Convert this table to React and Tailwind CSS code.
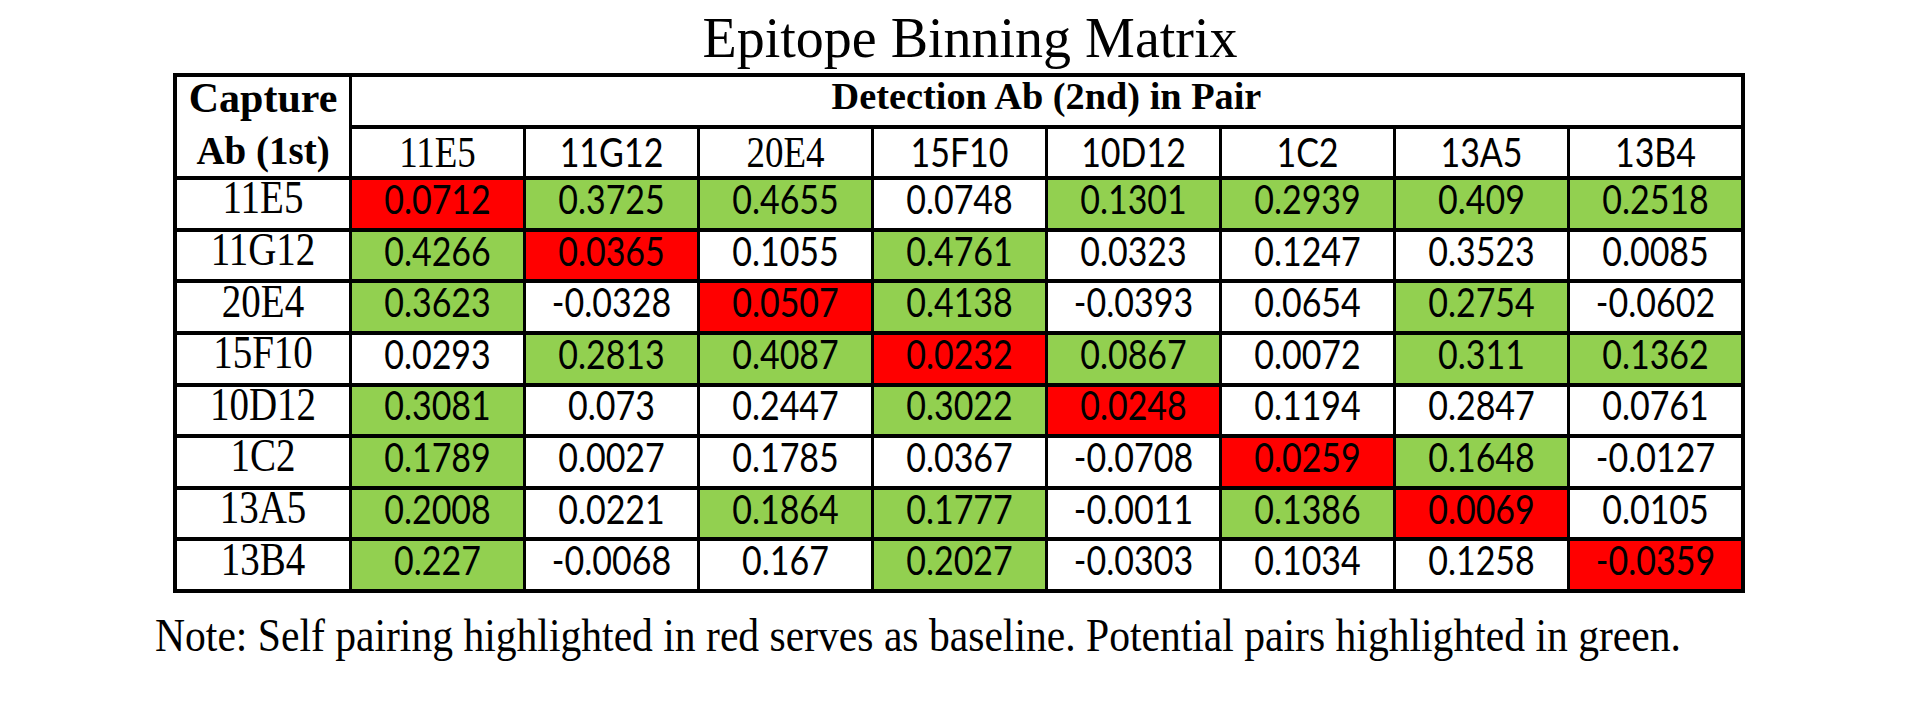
import React from "react";

const cols = [
  { label: "11E5", serif: true },
  { label: "11G12" },
  { label: "20E4", serif: true },
  { label: "15F10" },
  { label: "10D12" },
  { label: "1C2" },
  { label: "13A5" },
  { label: "13B4" },
];

// g = green, r = red, w = white
const rows = [
  ["11E5", [["0.0712", "r"], ["0.3725", "g"], ["0.4655", "g"], ["0.0748", "w"], ["0.1301", "g"], ["0.2939", "g"], ["0.409", "g"], ["0.2518", "g"]]],
  ["11G12", [["0.4266", "g"], ["0.0365", "r"], ["0.1055", "w"], ["0.4761", "g"], ["0.0323", "w"], ["0.1247", "w"], ["0.3523", "w"], ["0.0085", "w"]]],
  ["20E4", [["0.3623", "g"], ["-0.0328", "w"], ["0.0507", "r"], ["0.4138", "g"], ["-0.0393", "w"], ["0.0654", "w"], ["0.2754", "g"], ["-0.0602", "w"]]],
  ["15F10", [["0.0293", "w"], ["0.2813", "g"], ["0.4087", "g"], ["0.0232", "r"], ["0.0867", "g"], ["0.0072", "w"], ["0.311", "g"], ["0.1362", "g"]]],
  ["10D12", [["0.3081", "g"], ["0.073", "w"], ["0.2447", "w"], ["0.3022", "g"], ["0.0248", "r"], ["0.1194", "w"], ["0.2847", "w"], ["0.0761", "w"]]],
  ["1C2", [["0.1789", "g"], ["0.0027", "w"], ["0.1785", "w"], ["0.0367", "w"], ["-0.0708", "w"], ["0.0259", "r"], ["0.1648", "g"], ["-0.0127", "w"]]],
  ["13A5", [["0.2008", "g"], ["0.0221", "w"], ["0.1864", "g"], ["0.1777", "g"], ["-0.0011", "w"], ["0.1386", "g"], ["0.0069", "r"], ["0.0105", "w"]]],
  ["13B4", [["0.227", "g"], ["-0.0068", "w"], ["0.167", "w"], ["0.2027", "g"], ["-0.0303", "w"], ["0.1034", "w"], ["0.1258", "w"], ["-0.0359", "r"]]],
];

const bg = { g: "bg-[#92D050]", r: "bg-[#FF0000]", w: "bg-white" };

const serif = "font-['Liberation_Serif','Times_New_Roman',serif]";
const sans = "font-['Lato','Liberation_Sans',sans-serif]";

function Tall({ children }) {
  return <span className="inline-block scale-y-[1.18]">{children}</span>;
}

export default function App() {
  return (
    <div className="w-[1920px] h-[714px] bg-white text-black overflow-hidden">
      <div className="flex flex-col pl-[155px]">
        <div className="ml-[18px] w-[1572px] h-[73px] pt-[10px] pl-[22px] text-center">
          <div className={`${serif} text-[56px] leading-none`}>Epitope Binning Matrix</div>
        </div>

        <div className="ml-[18px] w-[1572px] bg-black p-[4px] grid grid-cols-[172px_repeat(8,171px)] auto-rows-[47.6px] gap-x-[3px] gap-y-[4px]">
          <div className={`row-span-2 bg-white flex flex-col ${serif} font-bold leading-none`}>
            <div className="h-[47.6px] flex items-center justify-center pb-[6px] text-[42px]">Capture</div>
            <div className="h-[4px]" />
            <div className="h-[47.6px] flex items-center justify-center pb-[4px] text-[39px]">Ab (1st)</div>
          </div>
          <div className={`col-span-8 bg-white flex items-center justify-center pb-[10px] ${serif} font-bold text-[38.3px] leading-none`}>
            Detection Ab (2nd) in Pair
          </div>

          {cols.map((c) => (
            <div
              key={c.label}
              className={`bg-white flex items-center justify-center leading-none ${
                c.serif ? `${serif} text-[37px]` : `${sans} text-[34px]`
              }`}
            >
              <Tall>{c.label}</Tall>
            </div>
          ))}

          {rows.map(([name, cells]) => (
            <React.Fragment key={name}>
              <div className={`bg-white flex items-center justify-center pb-[12px] ${serif} text-[39px] leading-none`}>
                <Tall>{name}</Tall>
              </div>
              {cells.map(([v, k], i) => (
                <div
                  key={i}
                  className={`${bg[k]} flex items-center justify-center pb-[10px] ${sans} text-[34px] leading-none`}
                >
                  <Tall>{v}</Tall>
                </div>
              ))}
            </React.Fragment>
          ))}
        </div>

        <div className={`mt-[23px] ${serif} text-[41.6px] leading-none whitespace-nowrap`}>
          <span className="inline-block scale-y-[1.1]">
            Note: Self pairing highlighted in red serves as baseline. Potential pairs highlighted in green.
          </span>
        </div>
      </div>
    </div>
  );
}
